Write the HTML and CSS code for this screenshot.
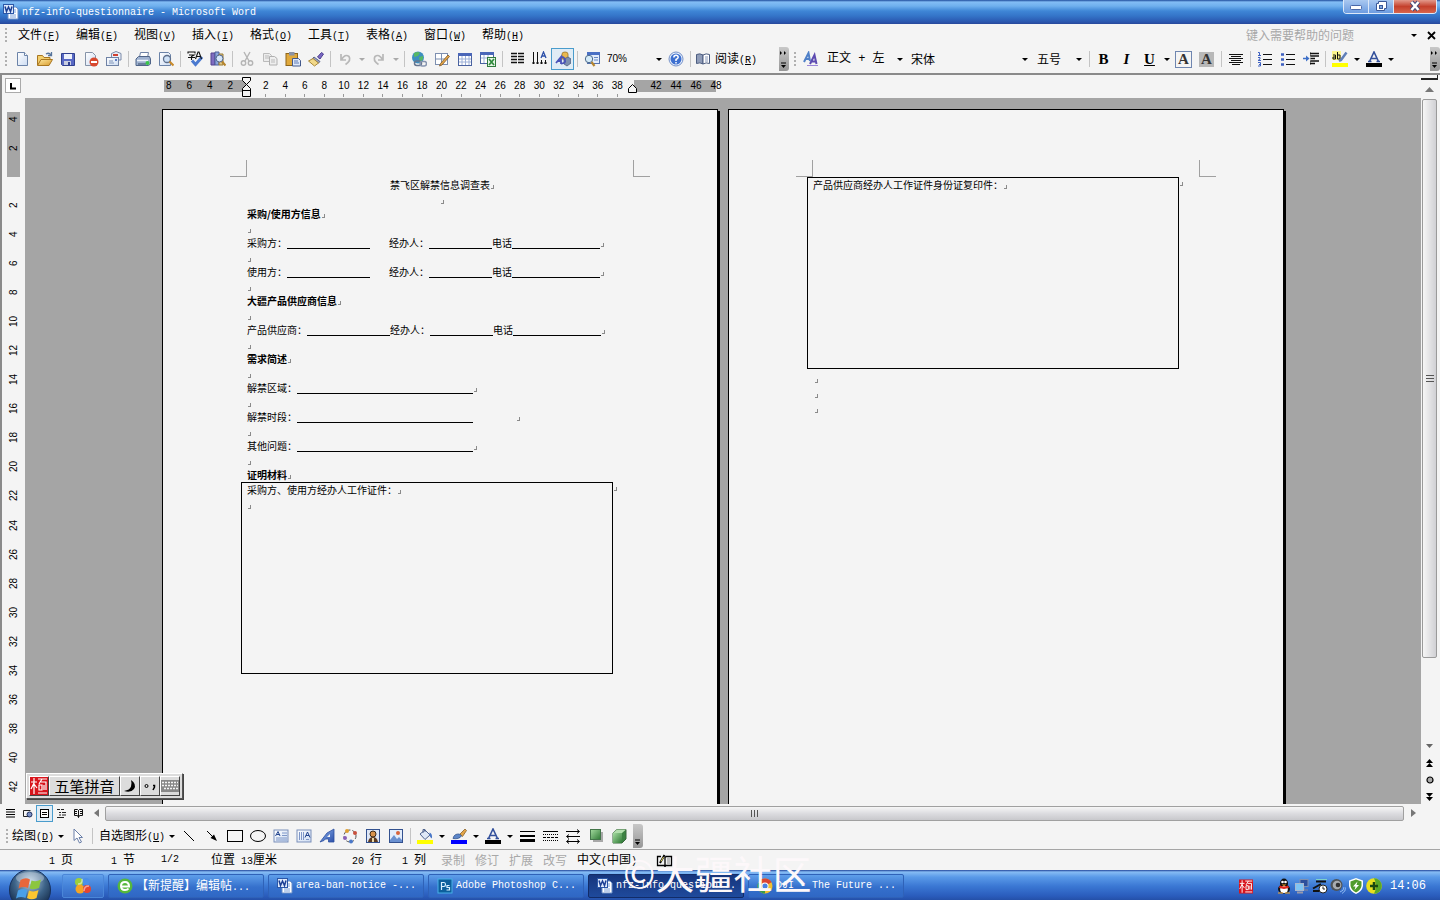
FILE: index.html
```html
<!DOCTYPE html>
<html lang="zh-CN">
<head>
<meta charset="utf-8">
<title>nfz-info-questionnaire - Microsoft Word</title>
<link rel="stylesheet" href="styles.css">
</head>
<body>
<svg class="defs" aria-hidden="true">
  <defs>
    <linearGradient id="gGold" x1="0" y1="0" x2="1" y2="1"><stop offset="0" stop-color="#ffe9a0"/><stop offset="1" stop-color="#d79a2b"/></linearGradient>
    <linearGradient id="gBlue" x1="0" y1="0" x2="1" y2="1"><stop offset="0" stop-color="#8db4f0"/><stop offset="1" stop-color="#2c4fa8"/></linearGradient>
    <linearGradient id="gPaper" x1="0" y1="0" x2="1" y2="1"><stop offset="0" stop-color="#fff"/><stop offset="1" stop-color="#cddcf2"/></linearGradient>
    <linearGradient id="gGreen" x1="0" y1="0" x2="1" y2="1"><stop offset="0" stop-color="#a5dca0"/><stop offset="1" stop-color="#2f7a35"/></linearGradient>
    <radialGradient id="gOrb" cx=".5" cy=".3" r=".75"><stop offset="0" stop-color="#b9d0e4"/><stop offset=".5" stop-color="#3d6388"/><stop offset="1" stop-color="#0a1c38"/></radialGradient>
    <symbol id="word" viewBox="0 0 16 16"><path d="M5 3h8l2 2v10H5z" fill="#fff" stroke="#6a8fc8"/><path d="M7 11h6M7 13h6M11 6h2M11 8h2" stroke="#7aa0da"/><rect x=".5" y=".5" width="10" height="9" fill="#dfeafc" stroke="#2b57a7"/><path d="M2 2.500l1.500 5L5.500 3l2 4.500L9 2.500" fill="none" stroke="#1c3f94" stroke-width="1.500"/></symbol>
    <symbol id="seal" viewBox="0 0 18 18"><rect width="18" height="18" fill="#d8141c"/><path d="M1 5h6M4 1v16M4 6L1 12M4 7l3 4M8 2h9M12 2L9 7M11 5h5v8M9 8v5h3V8zM14 8v5M8 16h9" fill="none" stroke="#fff" stroke-width="1.200"/></symbol>
  </defs>
</svg>
<div class="app">
  <header class="titlebar">
    <svg class="i16"><use href="#word"/></svg>
    <h1 class="title">nfz-info-questionnaire - Microsoft Word</h1>
    <div class="winctl">
      <button class="wc" aria-label="最小化"><svg width="14" height="12"><rect x="1.500" y="5.500" width="11" height="4" rx="1" fill="#fff" stroke="#4a68a8"/></svg></button>
      <button class="wc" aria-label="还原"><svg width="14" height="12"><path d="M4.500 1.500h8v7h-2v2h-8v-7h2z" fill="#fff" stroke="#3a5898"/><rect x="5.500" y="5.500" width="3" height="3" fill="#7fa8e0" stroke="#3a5898"/></svg></button>
      <button class="wc close" aria-label="关闭"><svg width="14" height="12"><path d="M3.500 2l7 8M10.500 2l-7 8" stroke="#4a4a78" stroke-width="4.500"/><path d="M3.500 2l7 8M10.500 2l-7 8" stroke="#fff" stroke-width="2.500"/></svg></button>
    </div>
  </header>

  <nav class="menubar">
    <i class="grip"></i>
    <button class="menu">文件<span class="m">(<u>F</u>)</span></button>
    <button class="menu">编辑<span class="m">(<u>E</u>)</span></button>
    <button class="menu">视图<span class="m">(<u>V</u>)</span></button>
    <button class="menu">插入<span class="m">(<u>I</u>)</span></button>
    <button class="menu">格式<span class="m">(<u>O</u>)</span></button>
    <button class="menu">工具<span class="m">(<u>T</u>)</span></button>
    <button class="menu">表格<span class="m">(<u>A</u>)</span></button>
    <button class="menu">窗口<span class="m">(<u>W</u>)</span></button>
    <button class="menu">帮助<span class="m">(<u>H</u>)</span></button>
    <input class="ask" type="text" placeholder="键入需要帮助的问题" aria-label="键入需要帮助的问题">
    <button class="drop" aria-label="帮助列表"></button>
    <button class="docclose" aria-label="关闭窗口"><svg width="9" height="9"><path d="M1 1l7 7M8 1L1 8" stroke="#000" stroke-width="1.800"/></svg></button>
  </nav>

  <div class="toolbars">
    <div class="toolbar std">
      <i class="grip"></i>
      <button class="tb" aria-label="新建"><svg class="i16"><path d="M3.500 1.500h7l3 3v10h-10z" fill="url(#gPaper)" stroke="#6b83a8"/><path d="M10.500 1.500v3h3" fill="#fff" stroke="#6b83a8"/></svg></button>
      <button class="tb" aria-label="打开"><svg class="i16"><path d="M.5 14V4.500h5l1.500 2h6V9" fill="#f3cf6d" stroke="#a87620"/><path d="M.5 14.500L4 8.500h11.500l-3.500 6z" fill="url(#gGold)" stroke="#a87620"/><path d="M9 3q3-2 5 1M14.500 1v3.500H11" fill="none" stroke="#56749c" stroke-width="1.300"/></svg></button>
      <button class="tb" aria-label="保存"><svg class="i16"><path d="M1.500 2.500h13v12h-12l-1-1z" fill="#5868c4" stroke="#31418f"/><rect x="4" y="3" width="8" height="5" fill="#eef2fb"/><rect x="4" y="10" width="7" height="4" fill="#c8cde0"/><rect x="8" y="11" width="2" height="3" fill="#31418f"/></svg></button>
      <button class="tb" aria-label="权限"><svg class="i16"><path d="M2.500 1.500h7l3 3v10h-10z" fill="url(#gPaper)" stroke="#8593a8"/><circle cx="11" cy="11" r="4.500" fill="#d8482e"/><rect x="8" y="10" width="6" height="2" fill="#fff"/></svg></button>
      <button class="tb" aria-label="电子邮件"><svg class="i16"><path d="M5.500 6V2.500L10 .5l5 2V9h-3" fill="#e9eef7" stroke="#7a8aa8"/><path d="M7 4h5" stroke="#d04030" stroke-width="2"/><rect x=".5" y="6.500" width="12" height="8" fill="url(#gPaper)" stroke="#6f82a5"/><path d="M3 10h4M3 12h5" stroke="#7d93b8"/><rect x="9" y="8" width="2" height="2" fill="#5a7ac0"/></svg></button>
      <i class="sep"></i>
      <button class="tb" aria-label="打印"><svg class="i16"><path d="M4.500 6l1-4.500h8l-1 5" fill="#fff" stroke="#6f82a5"/><path d="M1 8l2.500-2.500h11L15.500 8v5l-2 1.500H1z" fill="#9fb2d0" stroke="#4f6488"/><path d="M2 9.500h11" stroke="#eef3fb" stroke-width="1.500"/><path d="M3 13h8" stroke="#394a68"/><circle cx="12.500" cy="12" r="2" fill="#39c54a"/></svg></button>
      <button class="tb" aria-label="打印预览"><svg class="i16"><path d="M1.500 1.500h9l2 2v11h-11z" fill="url(#gPaper)" stroke="#6b83a8"/><circle cx="9" cy="8" r="3.500" fill="#cfe2f8" stroke="#5d6f8c" stroke-width="1.300"/><path d="M11.500 10.500l4 4" stroke="#c88a2c" stroke-width="2.200"/></svg></button>
      <i class="sep"></i>
      <button class="tb" aria-label="拼写和语法"><svg class="i16"><path d="M5 9.500l3.500 4L15 6" fill="none" stroke="#4b7ad0" stroke-width="3"/><path d="M1 2.500V1h7v1.500M2 4h5L4.500 5.500V9M1 6.500h7M8.500 8l2.500-7h1l2.500 7M9.500 5.500h4" fill="none" stroke="#111" stroke-width="1.100"/></svg></button>
      <button class="tb" aria-label="信息检索"><svg class="i16"><path d="M1 2h4v12H1z" fill="#7e6cc0" stroke="#54428f"/><path d="M5 1h4v13H5z" fill="#8aa4dc" stroke="#4c5f98"/><path d="M9 3h4v11H9z" fill="#dfc586" stroke="#9a7c34"/><circle cx="9.500" cy="7.500" r="3.500" fill="#d4e6fb" stroke="#51648c"/><path d="M12 10.500l3.500 4" stroke="#b5852f" stroke-width="2.200"/></svg></button>
      <i class="sep"></i>
      <button class="tb" aria-label="剪切"><svg class="i16"><path d="M5 1l5 9M11 1L6 10" stroke="#b5b5b5" stroke-width="1.400"/><circle cx="4.500" cy="12" r="2.200" fill="none" stroke="#b5b5b5" stroke-width="1.400"/><circle cx="11.500" cy="12" r="2.200" fill="none" stroke="#b5b5b5" stroke-width="1.400"/></svg></button>
      <button class="tb" aria-label="复制"><svg class="i16"><path d="M1.500 2.500h6l2 2v6h-8z" fill="#ececec" stroke="#bbb"/><path d="M7.500 5.500h5l2.500 2v6.500H7.500z" fill="#eee" stroke="#b0b0b0"/><path d="M3 5h4M3 7h4M9 9h4M9 11h4" stroke="#bbb"/></svg></button>
      <button class="tb" aria-label="粘贴"><svg class="i16"><rect x="1" y="2.500" width="11.500" height="12" fill="#e0a93c" stroke="#8d651b"/><rect x="4" y="1" width="5.500" height="3.500" fill="#8b93a5"/><path d="M7.500 7.500h6l2 2v5.500h-8z" fill="#dfe9fa" stroke="#42598c"/><path d="M9 10h4M9 12h5" stroke="#5f7ab5"/></svg></button>
      <button class="tb" aria-label="格式刷"><svg class="i16"><path d="M9.500 6L13.500 1.500l2 1.500L12 8z" fill="#7a68c4" stroke="#4d3f90"/><path d="M6 6l6 4.500-1.500 1.500-6-4.500z" fill="#9aa3c0" stroke="#5d678c"/><path d="M5 7.500l5.500 4.500-4 3L.5 10z" fill="#f2d98a" stroke="#a9893a"/></svg></button>
      <i class="sep"></i>
      <button class="tb" aria-label="撤消"><svg class="i16"><path d="M4 3v6h5M4.500 8.500Q8 2.500 12 5.500q2.500 4-3.500 8" fill="none" stroke="#b8b8b8" stroke-width="1.700"/></svg></button><button class="drop off" aria-label="撤消列表"></button>
      <button class="tb" aria-label="恢复"><svg class="i16"><path d="M12 3v6H7M11.500 8.500Q8 2.500 4 5.500q-2.500 4 3.500 8" fill="none" stroke="#b8b8b8" stroke-width="1.700"/></svg></button><button class="drop off" aria-label="恢复列表"></button>
      <i class="sep"></i>
      <button class="tb" aria-label="超链接"><svg class="i16"><circle cx="7" cy="6.500" r="6" fill="#3d8fc0"/><path d="M3 2q4-2 6 0l-2 3-4 1zM8 6l4-1v3l-3 4z" fill="#57b865"/><rect x="3.500" y="10" width="7" height="4.500" rx="2.200" fill="none" stroke="#66758f" stroke-width="1.500"/><rect x="9" y="10.500" width="6.500" height="4.500" rx="2.200" fill="none" stroke="#8795b0" stroke-width="1.500"/></svg></button>
      <button class="tb" aria-label="表格和边框"><svg class="i16"><rect x="1.500" y="2.500" width="12" height="11" fill="#fff" stroke="#7d8fb0"/><path d="M7.500 2.500v11M1.500 8h12" stroke="#7d8fb0"/><path d="M14 4l1.500 1.500L8 14l-2.500 1 1-2.500z" fill="#e3a548" stroke="#7d5725" stroke-width=".8"/></svg></button>
      <button class="tb" aria-label="插入表格"><svg class="i16"><rect x="1.500" y="2.500" width="13" height="12" fill="#fff" stroke="#4a62a0"/><rect x="1" y="2" width="14" height="3" fill="#4a66b8"/><path d="M5 5v9M8.500 5v9M12 5v9M2 8h12M2 11h12" stroke="#9db0d8"/></svg></button>
      <button class="tb" aria-label="插入 Excel 工作表"><svg class="i16"><rect x=".5" y="1.500" width="13" height="11" fill="#fff" stroke="#4a62a0"/><rect x="0" y="1" width="14" height="3" fill="#4a66b8"/><path d="M4 4v8M8 4v8M1 7h12" stroke="#9db0d8"/><rect x="7.500" y="6.500" width="8" height="9" fill="#e6f5e6" stroke="#2f7a3c"/><path d="M9 8l5 6M14 8l-5 6" stroke="#2f8a3c" stroke-width="1.700"/></svg></button>
      <i class="sep"></i>
      <button class="tb" aria-label="分栏"><svg class="i16"><path d="M2 2.500h6M2 5.500h6M2 8.500h6M2 11.500h6M9 2.500h6M9 5.500h6M9 8.500h6M9 11.500h6" stroke="#111" stroke-width="1.300"/></svg></button>
      <button class="tb" aria-label="文字方向"><svg class="i16"><path d="M1.500 1v12M5.500 1v12M9.500 9v4M13.500 9v4M0 12h3M4 12h3M8 12h3M12 12h3" stroke="#111"/><path d="M9 7l2.500-6L14 7M10 5h3" fill="none" stroke="#2c4fa8" stroke-width="1.300"/></svg></button>
      <button class="tb on" aria-label="绘图"><svg class="i16"><path d="M7 3q0-2 3-2t3 2v5H7z" fill="#e9b94f" stroke="#9b7425" stroke-width=".8"/><path d="M9 8l4-2 3 2v4l-4 3-3-2z" fill="#7c8fae" stroke="#4f607e" stroke-width=".8"/><path d="M1 12l5-6v7M3 10h3M6 12.500q5 0 4-3.500T6 6" fill="none" stroke="#4953b8" stroke-width="1.800"/></svg></button>
      <i class="sep"></i>
      <button class="tb" aria-label="文档结构图"><svg class="i16"><rect x="3.500" y="1.500" width="12" height="11" fill="#e4edfb" stroke="#5572ad"/><rect x="3" y="1" width="13" height="3" fill="#4a70c4"/><path d="M10 6.500h4M10 9h4" stroke="#6688c4"/><circle cx="5" cy="8" r="3.700" fill="#d4ebf8" stroke="#4d6a8c"/><path d="M7.500 11l3 4" stroke="#b5852f" stroke-width="2.200"/></svg></button>
      <label class="combo zoom"><select aria-label="显示比例"><option>70%</option></select></label>
      <button class="tb" aria-label="帮助"><svg class="i16"><circle cx="8" cy="8" r="7" fill="#e9f1fd" stroke="#7591c8"/><circle cx="8" cy="8" r="5.500" fill="#3d70d0"/><path d="M5.800 6.500Q6 4.300 8 4.300t2.200 2Q10.200 7.500 8 8.500V10M8 11v1.500" fill="none" stroke="#fff" stroke-width="1.500"/></svg></button>
      <i class="sep"></i>
      <button class="tb read"><svg class="i16"><path d="M8 4Q5 2 1.500 3.500v9Q5 11 8 13z" fill="#8f9cb8" stroke="#4c5d80"/><path d="M8 4q3-2 6.500-.5v9Q11 11 8 13z" fill="#fff" stroke="#4c5d80"/><path d="M10 6h3M10 8h3M10 10h3" stroke="#8a9aba"/></svg><span>阅读<span class="m">(<u>R</u>)</span></span></button>
    </div>
    <button class="more" aria-label="工具栏选项"><svg width="9" height="24"><path d="M1 4l2 2-2 2zM5 4l2 2-2 2z" fill="#000"/><path d="M2 16h5" stroke="#000"/><path d="M2 18h5l-2.500 3z" fill="#000"/></svg></button>
    <div class="toolbar fmt">
      <i class="grip"></i>
      <button class="tb" aria-label="格式窗格"><svg class="i16"><path d="M1 11L5.500 2l1.500 8M3 8h4" fill="none" stroke="#4f80c8" stroke-width="2"/><path d="M7 13L11.500 4l2 9M9 10.500h4" fill="none" stroke="#5d4bb0" stroke-width="2"/><path d="M4 14.500h11" stroke="#9a86d8"/></svg></button>
      <label class="combo style"><select aria-label="样式"><option>正文 + 左</option></select></label>
      <label class="combo font"><select aria-label="字体"><option>宋体</option></select></label>
      <label class="combo size"><select aria-label="字号"><option>五号</option></select></label>
      <i class="sep"></i>
      <button class="tb serif b">B</button>
      <button class="tb serif it">I</button>
      <button class="tb serif un">U</button><button class="drop" aria-label="下划线"></button>
      <button class="tb" aria-label="字符边框"><span class="serif cbox">A</span></button>
      <button class="tb" aria-label="字符底纹"><span class="serif cshade">A</span></button>
      <i class="sep"></i>
      <button class="tb" aria-label="居中"><svg class="i16"><path d="M1 3.500h14M3 5.500h10M1 7.500h14M3 9.500h10M1 11.500h14M4 13.500h8" stroke="#111"/></svg></button>
      <i class="sep"></i>
      <button class="tb" aria-label="编号"><svg class="i16"><path d="M6 3.500h9M6 8.500h9M6 13.500h9" stroke="#111"/><path d="M1 1.500h1.500v3M1 4.500h3M1 6.500h2v1.500L1 9.500h3M1 11.500h2.500v3.500H1M2 13.500h1.500" fill="none" stroke="#3d5fc0"/></svg></button>
      <button class="tb" aria-label="项目符号"><svg class="i16"><path d="M6 3.500h9M6 8.500h9M6 13.500h9" stroke="#111"/><path d="M1 3.500h3M1 8.500h3M1 13.500h3" stroke="#3d5fc0" stroke-width="2.500"/></svg></button>
      <button class="tb" aria-label="增加缩进"><svg class="i16"><path d="M7 2.500h9M7 5h9M7 7.500h5M7 10h9M7 12.500h5" stroke="#111" stroke-width="1.300"/><path d="M7.500 1v14" stroke="#777" stroke-dasharray="1 1"/><path d="M0 7.500h4" stroke="#3d6fc8" stroke-width="1.500"/><path d="M3 4.500l3.500 3-3.500 3z" fill="#3d6fc8"/></svg></button>
      <i class="sep"></i>
      <button class="tb" aria-label="突出显示"><svg class="i16"><rect y="12" width="16" height="4" fill="#ff0"/><rect width="9" height="9" fill="#fbf58e"/><path d="M1 4h2.500v4H1V6h2M5.500 1v7H8V4H5.500" fill="none" stroke="#111"/><path d="M14.500 1.500L9 9l-2 1" fill="none" stroke="#5f7fb8" stroke-width="2.500"/></svg></button><button class="drop" aria-label="突出显示颜色"></button>
      <button class="tb" aria-label="字体颜色"><svg class="i16"><rect y="12" width="16" height="4" fill="#000"/><path d="M3.500 10.500L8 1l4.500 9.500M5.500 7.500h5M2 10.500h3.500M10.500 10.500H14" fill="none" stroke="#34519c" stroke-width="1.600"/></svg></button><button class="drop" aria-label="字体颜色列表"></button>
    </div>
    <button class="more" aria-label="工具栏选项"><svg width="9" height="24"><path d="M1 4l2 2-2 2zM5 4l2 2-2 2z" fill="#000"/><path d="M2 16h5" stroke="#000"/><path d="M2 18h5l-2.500 3z" fill="#000"/></svg></button>
  </div>

  <main class="work">
    <div class="corner"><button class="tabsel" aria-label="制表符"><svg width="14" height="14"><path d="M5 4v5.500h5" fill="none" stroke="#000" stroke-width="2"/></svg></button></div>
    <div class="hruler">
      <div class="hscale">
        <div class="hleft"><span>8</span><span>6</span><span>4</span><span>2</span></div>
        <div class="hmid"><span>2</span><span>4</span><span>6</span><span>8</span><span>10</span><span>12</span><span>14</span><span>16</span><span>18</span><span>20</span><span>22</span><span>24</span><span>26</span><span>28</span><span>30</span><span>32</span><span>34</span><span>36</span><span>38</span></div>
        <div class="hright"><span>42</span><span>44</span><span>46</span><span>48</span></div>
        <svg class="indent" width="11" height="22"><path d="M1.500 1.500h8v3l-4 4-4-4zM5.500 8.500l4 4v8h-8v-8zM1.500 14.500h8" fill="#f4f4f4" stroke="#000"/></svg>
        <svg class="rindent" width="11" height="11"><path d="M1.500 9.500v-4l4-4 4 4v4z" fill="#f4f4f4" stroke="#000"/></svg>
      </div>
    </div>
    <div class="vscroll">
      <i class="split"></i>
      <button class="sb up" aria-label="向上"><svg width="9" height="5"><path d="M0 5l4.500-5L9 5z" fill="#777"/></svg></button>
      <div class="vthumb"><i></i><i></i><i></i></div>
      <span class="vfill"></span>
      <button class="sb" aria-label="向下"><svg width="7" height="4"><path d="M0 0h7L3.500 4z" fill="#666"/></svg></button>
      <button class="sb" aria-label="前一页"><svg width="7" height="8"><path d="M0 4l3.500-4L7 4zM0 8l3.500-4L7 8z" fill="#000"/></svg></button>
      <button class="sb" aria-label="选择浏览对象"><svg width="8" height="8"><circle cx="4" cy="4" r="3" fill="#aaa" stroke="#000" stroke-width="1.200"/></svg></button>
      <button class="sb" aria-label="下一页"><svg width="7" height="8"><path d="M0 0h7L3.500 4zM0 4h7L3.500 8z" fill="#000"/></svg></button>
    </div>
    <div class="vruler">
      <div class="vtop"><span>4</span><span>2</span></div>
      <div class="vmid"><span>2</span><span>4</span><span>6</span><span>8</span><span>10</span><span>12</span><span>14</span><span>16</span><span>18</span><span>20</span><span>22</span><span>24</span><span>26</span><span>28</span><span>30</span><span>32</span><span>34</span><span>36</span><span>38</span><span>40</span><span>42</span></div>
    </div>
    <div class="desk">
      <article class="page">
        <div class="crops"><i class="crop l"></i><i class="crop r"></i></div>
        <div class="body">
          <p class="center">禁飞区解禁信息调查表<i class="mark"></i></p>
          <p class="gap center"><i class="mark"></i></p>
          <p class="bold">采购/使用方信息<i class="mark"></i></p>
          <p class="gap"><i class="mark"></i></p>
          <p><span class="lab3">采购方：</span><span class="w83"></span><span class="tab"></span><span class="lab3">经办人：</span><span class="w63"></span><span>电话</span><span class="w88"></span><i class="mark"></i></p>
          <p class="gap"><i class="mark"></i></p>
          <p><span class="lab3">使用方：</span><span class="w83"></span><span class="tab"></span><span class="lab3">经办人：</span><span class="w63"></span><span>电话</span><span class="w88"></span><i class="mark"></i></p>
          <p class="gap"><i class="mark"></i></p>
          <p class="bold">大疆产品供应商信息<i class="mark"></i></p>
          <p class="gap"><i class="mark"></i></p>
          <p><span>产品供应商：</span><span class="w83"></span><span class="lab3">经办人：</span><span class="w63"></span><span>电话</span><span class="w88"></span><i class="mark"></i></p>
          <p class="gap"><i class="mark"></i></p>
          <p class="bold">需求简述<i class="mark"></i></p>
          <p class="gap"><i class="mark"></i></p>
          <p><span>解禁区域：</span><span class="w176"></span><i class="mark"></i></p>
          <p class="gap"><i class="mark"></i></p>
          <p><span>解禁时段：</span><span class="w176"></span><span class="tab wide"></span><i class="mark"></i></p>
          <p class="gap"><i class="mark"></i></p>
          <p><span>其他问题：</span><span class="w176"></span><i class="mark"></i></p>
          <p class="gap"><i class="mark"></i></p>
          <p class="bold">证明材料<i class="mark"></i></p>
          <div class="cellrow">
            <div class="cell"><p>采购方、使用方经办人工作证件：<i class="mark"></i></p><p><i class="mark"></i></p></div>
            <i class="mark"></i>
          </div>
        </div>
      </article>
      <article class="page">
        <div class="crops"><i class="crop l"></i><i class="crop r"></i></div>
        <div class="body">
          <div class="cellrow">
            <div class="cell"><p>产品供应商经办人工作证件身份证复印件：<i class="mark"></i></p></div>
            <i class="mark"></i>
          </div>
          <p><i class="mark in"></i></p>
          <p><i class="mark in"></i></p>
          <p><i class="mark in"></i></p>
        </div>
      </article>
    </div>
  </main>

  <div class="hscroll">
    <button class="vw" aria-label="普通视图"><svg width="11" height="11"><path d="M1 1.500h9M1 4h9M1 6.500h9M1 9h9" stroke="#000" stroke-width="1.200"/></svg></button>
    <button class="vw" aria-label="Web 版式视图"><svg width="11" height="11"><path d="M8 8.500H1.500v-6h7" fill="none" stroke="#222"/><circle cx="7.500" cy="6.500" r="2.500" fill="#7d93c8" stroke="#1c2d5c"/></svg></button>
    <button class="vw on" aria-label="页面视图"><svg width="11" height="11"><rect x="1.500" y="1.500" width="8" height="8" fill="#fff" stroke="#000"/><path d="M3 4.500h5M3 6.500h5" stroke="#000"/></svg></button>
    <button class="vw" aria-label="大纲视图"><svg width="11" height="11"><path d="M1 1.500h3M5 1.500h3M3 4.500h2M6 4.500h4M3 7h2M6 7h4M1 9.500h7" stroke="#222"/></svg></button>
    <button class="vw" aria-label="阅读版式"><svg width="11" height="11"><path d="M1.500 1.500h3l1 1 1-1h3v6h-3l-1 2-1-2h-3zM5.500 2.500v7M2 3.500h2M2 5.500h2M7 3.500h2M7 5.500h2" fill="none" stroke="#111"/></svg></button>
    <button class="ha" aria-label="向左"><svg width="5" height="8"><path d="M5 0v8L0 4z" fill="#777"/></svg></button>
    <div class="hthumb"><i></i><i></i><i></i></div>
    <button class="ha" aria-label="向右"><svg width="5" height="8"><path d="M0 0v8l5-4z" fill="#777"/></svg></button>
  </div>

  <div class="drawbar">
    <i class="grip"></i>
    <button class="txt">绘图<span class="m">(<u>D</u>)</span></button><button class="drop" aria-label="绘图菜单"></button>
    <button class="tb" aria-label="选择对象"><svg class="i16"><path d="M4 1v11.500l3-2.500 2.500 5 2-1-2.500-4.500h3.500z" fill="#fff" stroke="#6a7fa8"/></svg></button>
    <i class="sep"></i>
    <button class="txt">自选图形<span class="m">(<u>U</u>)</span></button><button class="drop" aria-label="自选图形菜单"></button>
    <button class="tb" aria-label="直线"><svg class="i16"><path d="M3 3l10 10" stroke="#000"/></svg></button>
    <button class="tb" aria-label="箭头"><svg class="i16"><path d="M3 3l7 7" stroke="#000"/><path d="M13 13L6.500 10l3.500-3.500z" fill="#000"/></svg></button>
    <button class="tb" aria-label="矩形"><svg class="i16"><rect x=".5" y="2.500" width="15" height="11" fill="none" stroke="#000"/></svg></button>
    <button class="tb" aria-label="椭圆"><svg class="i16"><ellipse cx="8" cy="8" rx="7.500" ry="5.500" fill="none" stroke="#000"/></svg></button>
    <button class="tb" aria-label="文本框"><svg class="i16"><rect x="1" y="2" width="14" height="12" fill="url(#gPaper)" stroke="#7b8fba"/><path d="M2.500 8L5 3.500 7 8M3.500 6.500h3" fill="none" stroke="#23458f"/><path d="M9 5h5M9 7.500h5M3 10h11M3 12h11" stroke="#7f97c8"/></svg></button>
    <button class="tb" aria-label="竖排文本框"><svg class="i16"><rect x="1" y="2" width="14" height="12" fill="url(#gPaper)" stroke="#7b8fba"/><path d="M9 9.500L11.500 4 14 9.500M10 7.500h3" fill="none" stroke="#23458f"/><path d="M3.500 4v8M5.500 4v8M7.500 4v8M10 11.500h3" stroke="#7f97c8"/></svg></button>
    <button class="tb" aria-label="艺术字"><svg class="i16"><path d="M1 14l4-1.500L6.500 11h3v3H15V1L8 5z" fill="url(#gBlue)" stroke="#2c4fa0" stroke-width=".8"/><path d="M8 9l3-3v3z" fill="#f4f4f4"/></svg></button>
    <button class="tb" aria-label="组织结构图"><svg class="i16"><circle cx="8" cy="8" r="6" fill="none" stroke="#555" stroke-dasharray="3 2"/><circle cx="5" cy="3" r="2" fill="#e0a030"/><circle cx="13" cy="5" r="2" fill="#c8503c"/><circle cx="3" cy="10" r="2" fill="#8a60b8"/><circle cx="9" cy="13.500" r="2" fill="#4a78c8"/></svg></button>
    <button class="tb" aria-label="剪贴画"><svg class="i16"><rect x="1.500" y="1.500" width="13" height="13" fill="#dfe7f5" stroke="#33518f"/><circle cx="8" cy="6" r="3" fill="#d8924a" stroke="#3c2a18"/><path d="M3 14q1-5 5-5t5 5z" fill="#5c3a20"/><path d="M8 14v-4" stroke="#e8d8a8" stroke-width="2"/></svg></button>
    <button class="tb" aria-label="图片"><svg class="i16"><rect x="1.500" y="1.500" width="13" height="13" fill="#e3edfb" stroke="#33518f"/><path d="M2 12l4-5 3 4 2-2 3 3v2H2z" fill="#6a90d0"/><circle cx="10" cy="5" r="2" fill="#d8643c"/></svg></button>
    <i class="sep"></i>
    <button class="tb" aria-label="填充颜色"><svg class="i16"><rect y="12" width="16" height="4" fill="#ff0"/><path d="M3 6l5-4 5 5-5 4.500z" fill="#dfe8f6" stroke="#51658f"/><path d="M6 5V1.500h2V4" fill="none" stroke="#51658f"/><path d="M12.500 4.500q3 1 2.500 6-2-1-2.500-3z" fill="#4a78c8"/></svg></button><button class="drop" aria-label="填充颜色列表"></button>
    <button class="tb" aria-label="线条颜色"><svg class="i16"><rect y="12" width="16" height="4" fill="#00f"/><path d="M9 6l5-5 1.500 1.500-4 6z" fill="#e3a548" stroke="#8a622b" stroke-width=".8"/><path d="M2 10.500q1-5 6.500-4.500l2 2Q8 11.500 2 10.500z" fill="#5d86c8" stroke="#33558f" stroke-width=".8"/></svg></button><button class="drop" aria-label="线条颜色列表"></button>
    <button class="tb" aria-label="字体颜色"><svg class="i16"><rect y="12" width="16" height="4" fill="#000"/><path d="M3.500 10.500L8 1l4.500 9.500M5.500 7.500h5M2 10.500h3.500M10.500 10.500H14" fill="none" stroke="#34519c" stroke-width="1.600"/></svg></button><button class="drop" aria-label="字体颜色列表"></button>
    <button class="tb" aria-label="线型"><svg class="i16"><path d="M1 3.500h15" stroke="#000"/><path d="M1 8h15" stroke="#000" stroke-width="2"/><path d="M1 12.500h15" stroke="#000" stroke-width="3"/></svg></button>
    <button class="tb" aria-label="虚线线型"><svg class="i16"><path d="M1 3.500h15" stroke="#000"/><path d="M1 6.500h15M1 12.500h15" stroke="#000" stroke-dasharray="1 1"/><path d="M1 9.500h15" stroke="#000" stroke-dasharray="3 1"/></svg></button>
    <button class="tb" aria-label="箭头样式"><svg class="i16"><path d="M1 3.500h13M2 8.500h13M2 13.500h12M12 1.500l2.500 2L12 5.500M4 6.500l-2.500 2 2.500 2M4 11.500l-2.500 2 2.500 2M12 11.500l2.500 2-2.500 2" fill="none" stroke="#000"/></svg></button>
    <button class="tb" aria-label="阴影样式"><svg class="i16"><rect x="5" y="4" width="10" height="10" fill="#a8a8a8"/><rect x="2.500" y="1.500" width="10" height="10" fill="url(#gGreen)" stroke="#44764a"/></svg></button>
    <button class="tb" aria-label="三维效果样式"><svg class="i16"><path d="M2 5l4-3.500h9V11l-4 4H2z" fill="#3b8241" stroke="#39663c"/><path d="M2 5l4-3.500h9L11 5z" fill="#b4e0ae"/><rect x="2" y="5" width="9" height="10" fill="url(#gGreen)"/></svg></button>
    <button class="more" aria-label="工具栏选项"><svg width="9" height="24"><path d="M2 16h5" stroke="#000"/><path d="M2 18h5l-2.500 3z" fill="#000"/></svg></button>
  </div>

  <footer class="status">
    <span class="s62"><span class="m">1&nbsp;</span>页</span><span class="s50"><span class="m">1&nbsp;</span>节</span><span class="s50 m">1/2</span><span class="s141">位置<span class="m">&nbsp;13</span>厘米</span><span class="s50"><span class="m">20&nbsp;</span>行</span><span class="s39"><span class="m">1&nbsp;</span>列</span><span class="s34 dim">录制</span><span class="s34 dim">修订</span><span class="s34 dim">扩展</span><span class="s34 dim">改写</span><span class="s79">中文<span class="m">(</span>中国<span class="m">)</span></span>
    <svg width="17" height="13"><path d="M5 2.500H1.500v9H8l1 1 1-1h5.500v-9H10L9 3.500V12" fill="none" stroke="#000" stroke-width="1.300"/><path d="M11 5h3M11 7h3M11 9h3" stroke="#888"/><path d="M8.500 1L4 9" stroke="#000" stroke-width="2"/><path d="M7.500 3L5 7.500" stroke="#e8d860"/></svg>
  </footer>

  <div class="taskbar">
    <button class="start" aria-label="开始"><svg width="44" height="30"><circle cx="22" cy="20" r="20.500" fill="url(#gOrb)" stroke="#16305c"/><ellipse cx="22" cy="8" rx="14" ry="6" fill="#fff" opacity=".3"/><path d="M12.500 10q5-3 9.500-.5L20 18q-5-2-9.500.5z" fill="#e8673c"/><path d="M23.500 10.500q4.500 2 9.500-1L31 18q-5 2-9.500.5z" fill="#8cc63e"/><path d="M10 20.500q5-2.500 9.500-.5L17.500 28q-5-2-9.500.5z" fill="#4aa0e8"/><path d="M21 20.500q5 2 9.500-.5l-2 8q-5 2.500-9.500 0z" fill="#fcc630"/></svg></button>
    <button class="quick" aria-label="快速启动"><svg width="18" height="18"><circle cx="5" cy="5" r="4" fill="#9ccf3c"/><circle cx="12" cy="4.500" r="3.500" fill="#4a8fe8"/><circle cx="6" cy="12" r="4.500" fill="#f5a524"/><circle cx="13" cy="12" r="4" fill="#e5452f"/><path d="M4 7q5 0 4-5M10 14q0-5 5-5" fill="none" stroke="#fff" stroke-width="1.500" opacity=".5"/></svg></button>
    <button class="task"><svg class="i16"><circle cx="8" cy="8" r="7.500" fill="#56b83c"/><path d="M4 8.500h8Q12 4 8 4T4 8t4 4q2.500 0 3.500-1.500" fill="none" stroke="#fff" stroke-width="2"/></svg><span>【新提醒】编辑帖<span class="m">...</span></span></button>
    <button class="task"><svg class="i16"><use href="#word"/></svg><span class="m">area-ban-notice -...</span></button>
    <button class="task"><svg class="i16"><rect x="1" y="1" width="14" height="14" fill="#0c5f9c" stroke="#49b0e8"/><path d="M4.500 12V4.500H7q1.500 0 1.500 2T7 8.500H4.500M12.500 7.500h-2.500v2h2.500v2.500H9.500" fill="none" stroke="#d8f0ff" stroke-width="1.200"/></svg><span class="m">Adobe Photoshop C...</span></button>
    <button class="task active"><svg class="i16"><use href="#word"/></svg><span class="m">nfz-info-question...</span></button>
    <button class="task"><svg class="i16"><circle cx="8" cy="8" r="7.500" fill="#f0c030"/><path d="M8 8L1.500 4.200A7.500 7.500 0 0 1 14.500 4.200z" fill="#dc4432"/><path d="M8 8L1.500 4.200A7.500 7.500 0 0 0 8 15.500z" fill="#3a9a4a"/><circle cx="8" cy="8" r="3.500" fill="#fff"/><circle cx="8" cy="8" r="2.600" fill="#4a80e0"/></svg><span class="m">DJI - The Future ...</span></button>
    <div class="tray">
      <svg class="ts" width="14" height="17"><use href="#seal" width="14" height="17"/></svg>
      <svg class="i16"><ellipse cx="8" cy="11" rx="6" ry="4.500" fill="#111"/><ellipse cx="8" cy="5.500" rx="4" ry="5" fill="#111"/><ellipse cx="8" cy="11.500" rx="3.800" ry="3.500" fill="#fff"/><circle cx="6.500" cy="4" r="1.300" fill="#fff"/><circle cx="9.500" cy="4" r="1.300" fill="#fff"/><path d="M5.500 6.500h5L8 8zM2 14.500h5v1H2zM9 14.500h5v1H9z" fill="#f5a524"/><path d="M3.500 8.500q4.500 2.500 9 0" fill="none" stroke="#e0281c" stroke-width="2.500"/></svg>
      <svg class="i16"><rect x="6" y="1.500" width="8" height="7" fill="#2d4f9c" stroke="#8090b0"/><path d="M10 9v3h4" stroke="#889" fill="none"/><rect x="1.500" y="5.500" width="8" height="7" fill="#7fc4f4" stroke="#a8b8d0"/><path d="M3 14.500h6" stroke="#99a" stroke-width="2"/></svg>
      <svg class="i16"><path d="M4 3.500h10M1 10.500L9 6M1 13h8" stroke="#111" stroke-width="2"/><path d="M4 1.500h11" stroke="#7fd0c8"/><circle cx="11" cy="11" r="4" fill="#fff" stroke="#222"/><path d="M11 8.500V11h2" fill="none" stroke="#222"/></svg>
      <svg class="i16"><circle cx="6.500" cy="7" r="6" fill="#4f5458"/><circle cx="7" cy="7" r="4.300" fill="#a8acb0"/><circle cx="8" cy="7" r="2.300" fill="#333"/><path d="M10 14q4-1 4-5M12 15.500q4-2 3.500-6" fill="none" stroke="#8fb8f0"/></svg>
      <svg class="i16"><path d="M8 0l7 2.500V8q-1 5.500-7 8-6-2.500-7-8V2.500z" fill="#fff"/><path d="M8 1.500l5.500 2V8Q12.500 12 8 14.500 3.500 12 2.500 8V3.500z" fill="#4f9c2c"/><path d="M9.500 3.500L5 8.500h2.500L6.500 12 11 7H8.500z" fill="#fff"/></svg>
      <svg class="i16"><circle cx="8" cy="8" r="7.800" fill="#e8e020"/><path d="M8 .2a7.800 7.800 0 0 1 0 15.600Q12 8 8 .2z" fill="#58a828"/><path d="M8 4v8M4 8h8" stroke="#1a4a10" stroke-width="2.500"/></svg>
      <time class="clock">14:06</time>
    </div>
  </div>

  <div class="ime">
    <button aria-label="极点"><svg width="18" height="18"><use href="#seal" width="18" height="18"/></svg></button>
    <button class="imename">五笔拼音</button>
    <button aria-label="半角"><svg width="18" height="18"><path d="M10 3q6 4 3 9-3 4-10 2 6-1 7-4.500Q11 6 10 3z" fill="#000"/></svg></button>
    <button aria-label="标点"><svg width="18" height="18"><circle cx="5.500" cy="9" r="1.500" fill="none" stroke="#000"/><path d="M12 8.500h1.500V10L12 13" fill="none" stroke="#000" stroke-width="1.500"/></svg></button>
    <button aria-label="软键盘"><svg width="18" height="18"><rect y="3" width="18" height="12" fill="#888"/><path d="M1 5.500h16M1 8.500h16M3 11.500h14" stroke="#f4f4f4" stroke-width="1.500" stroke-dasharray="2 1"/></svg></button>
  </div>
  <div class="watermark">©大疆社区</div>
</div>
</body>
</html>
```
FILE: styles.css
```css
* { box-sizing: border-box; }
html, body { margin: 0; height: 100%; }
body {
  font: 12px/16px "Noto Sans CJK SC", sans-serif;
  color: #000;
  background: #f4f4f4;
  overflow: hidden;
}
button, input, select {
  font: inherit;
  color: inherit;
  background: none;
  border: 0;
  padding: 0;
  margin: 0;
  appearance: none;
  white-space: nowrap;
}
p, h1 { margin: 0; font-size: inherit; font-weight: 400; }
svg { display: block; flex: none; overflow: hidden; }
.defs { position: absolute; width: 0; height: 0; }
.m { font: 10px/16px "Liberation Mono", monospace; }
.i16 { width: 16px; height: 16px; }
.app { position: relative; height: 100vh; display: flex; flex-direction: column; }

/* title bar */
.titlebar {
  flex: none; height: 24px; display: flex; align-items: center; padding-left: 3px; gap: 3px;
  background: linear-gradient(#1f4c9c 0, #83bdf5 2px, #6fb0ee 6px, #3f86d6 11px, #3474c8 16px, #2a56ae 22px, #27479a 24px);
  color: #fff;
}
.title { flex: 1; font: 10px/16px "Liberation Mono", monospace; padding-top: 2px; }
.winctl { align-self: flex-start; display: flex; margin-right: 3px; height: 14px; border: 1px solid #dce8f8; border-top: 0; border-radius: 0 0 4px 4px; overflow: hidden; }
.wc { width: 25px; display: flex; justify-content: center; border-right: 1px solid #dce8f8; background: linear-gradient(#a9c8f0, #6c9ce0); }
.wc.close { width: 42px; border: 0; background: linear-gradient(#e39a8c, #c4402c 50%, #d8664c); }

/* menu bar */
.menubar { flex: none; height: 22px; display: flex; align-items: center; padding: 0 4px 0 5px; }
.grip { flex: none; width: 4px; height: 14px; margin-right: 1px; background: repeating-linear-gradient(#b0b0b0 0 2px, transparent 2px 4px) 0 0 / 2px 100% no-repeat; }
.menu { width: 58px; text-align: center; }
.ask { margin-left: auto; width: 162px; }
.ask::placeholder { color: #a8a8a8; opacity: 1; }
.drop { flex: none; width: 11px; height: 16px; display: flex; align-items: center; justify-content: center; }
.drop::after, .combo::after { content: ""; border: 3px solid transparent; border-top-color: #000; border-bottom: 0; }
.drop.off::after { border-top-color: #aaa; }
.docclose { width: 17px; display: flex; justify-content: flex-end; }

/* toolbars */
.toolbars { flex: none; height: 29px; display: flex; align-items: center; padding-bottom: 1px; border-bottom: 2px solid #8a8a8a; }
.toolbar { display: flex; align-items: center; }
.std { padding-left: 5px; flex: none; width: 779px; }
.fmt { flex: 1; padding-left: 5px; }
.tb { flex: none; width: 23px; height: 22px; display: flex; align-items: center; justify-content: center; }
.tb.on, .vw.on { background: #e0ecf5; outline: 1px solid #4a9ccc; outline-offset: -1px; }
.sep { flex: none; width: 6px; height: 16px; background: linear-gradient(#c4c4c4, #c4c4c4) 3px 0 / 1px 100% no-repeat; }
.combo { flex: none; display: flex; align-items: center; height: 20px; }
.combo select { flex: 1; min-width: 0; }
.zoom { width: 61px; padding: 0 2px 0 4px; font: 10px/16px "Liberation Sans", sans-serif; }
.style { width: 76px; margin-left: 5px; font-family: "Liberation Mono", "Noto Sans CJK SC", monospace; }
.font { width: 117px; margin-left: 8px; }
.size { width: 45px; margin: 0 4px 0 9px; }
.read { width: 66px; gap: 4px; }
.serif { font: 700 15px/16px "Liberation Serif", serif; }
.it { font-style: italic; }
.un { text-decoration: underline; }
.cbox, .cshade { width: 15px; height: 15px; line-height: 15px; color: #333; outline: 1px solid #6f86b0; }
.cshade { background: #b8b8b8; outline: 0; }
.more { flex: none; width: 10px; height: 24px; background: linear-gradient(#c8c8c8, #969696); border-radius: 0 3px 3px 0; }

/* document window */
.work { flex: 1; min-height: 0; display: grid; grid-template: 23px minmax(0, 1fr) / 23px minmax(0, 1fr) 17px; border-left: 2px solid #8a8a8a; padding-right: 2px; }
.corner { padding: 3px; }
.tabsel { display: flex; width: 16px; height: 15px; border: 1px solid #aaa; background: #fff; }
.hruler { display: flex; justify-content: center; min-width: 0; overflow: hidden; }
.hscale { position: relative; flex: none; display: flex; width: 1124px; padding: 5px 0 6px 3px; font: 10px/12px "Liberation Sans", sans-serif; }
.hleft { width: 82px; display: flex; justify-content: space-between; padding: 0 13px 0 2px; background: #a5a5a5; }
.hmid { width: 388px; display: flex; padding: 0 7px 0 10px; }
.hmid span { flex: 1; text-align: center; background: linear-gradient(#999, #999) 50% 100% / 1px 3px no-repeat; height: 17px; }
.hright { width: 82px; display: flex; padding-left: 12px; background: #a5a5a5; }
.hright span { flex: none; width: 20px; text-align: center; }
.indent { position: absolute; left: 80px; top: 1px; }
.rindent { position: absolute; left: 466px; top: 8px; }
.vruler { padding-top: 14px; overflow: hidden; font: 10px/12px "Liberation Sans", sans-serif; }
.vtop, .vmid { width: 13px; margin-left: 5px; display: flex; flex-direction: column; }
.vtop { height: 65px; background: #a5a5a5; padding-bottom: 15px; justify-content: space-between; }
.vtop span { height: 14px; }
.vtop span:last-child { height: 28px; }
.vmid { height: 610px; margin-top: 14px; }
.vmid span { flex: 1; }
.vtop span, .vmid span { writing-mode: vertical-rl; transform: rotate(180deg); text-align: center; line-height: 13px; }

.desk { background: #a5a5a5; overflow: hidden; display: flex; justify-content: center; gap: 10px; padding: 11px 0 0 0; }
.page { flex: none; width: 556px; height: 786px; border: 1px solid #000; background: #f4f4f4; box-shadow: 2px 2px 0 #000; font-size: 10px; line-height: 15px; padding-top: 50px; }
.crops { display: flex; justify-content: space-between; padding: 0 67px; }
.crop { width: 17px; height: 17px; border: 0 solid #a0a0a0; border-bottom-width: 1px; }
.crop.l { border-right-width: 1px; }
.crop.r { border-left-width: 1px; }
.body { padding: 1px 84px 0; }
.body p { display: flex; height: 15px; align-items: center; white-space: nowrap; padding-bottom: 2px; }
.body .gap { height: 14px; }
.body .center { justify-content: center; padding-left: 4px; }
.bold { font-weight: 700; }
.mark { flex: none; width: 3px; height: 4px; margin: 5px 0 0 1px; border: solid #8a8a8a; border-width: 0 1px 1px 0; }
.mark.in { margin-left: 2px; }
.lab3 { width: 40px; }
.tab { width: 19px; }
.tab.wide { width: 43px; }
.w83, .w63, .w88, .w176 { height: 12px; border-bottom: 1px solid #000; }
.w83 { width: 83px; }
.w63 { width: 63px; }
.w88 { width: 88px; }
.w176 { width: 176px; }
.cellrow { display: flex; margin: -1px -6px 3px; }
.cell { flex: none; width: 372px; height: 192px; border: 1px solid #000; padding-left: 5px; }

.vscroll { grid-row: 1 / 3; grid-column: 3; display: flex; flex-direction: column; align-items: center; }
.split { width: 17px; height: 5px; border: solid #222; border-width: 0 1px 2px 0; }
.sb { width: 17px; height: 17px; display: flex; align-items: center; justify-content: center; }
.up { height: 19px; }
.vthumb { flex: 558 1 0; width: 15px; border: 1px solid #9a9a9a; border-radius: 2px; background: linear-gradient(90deg, #f6f6f6, #d0d0d4); display: flex; flex-direction: column; align-items: center; justify-content: center; gap: 2px; }
.vthumb i { width: 8px; height: 1px; background: #555; }
.vfill { flex: 79 1 0; }

/* view buttons and horizontal scrollbar */
.hscroll { flex: none; height: 18px; display: flex; align-items: center; padding: 0 18px 0 2px; margin-top: -1px; background: #f4f4f4; z-index: 1; }
.vw { width: 17px; height: 17px; display: flex; align-items: center; justify-content: center; }
.ha { width: 18px; display: flex; justify-content: center; }
.hthumb { flex: 1; height: 15px; border: 1px solid #a0a0a0; border-radius: 2px; background: linear-gradient(#f6f6f6, #dcdce0 50%, #c8c8cc); display: flex; align-items: center; justify-content: center; gap: 2px; }
.hthumb i { width: 1px; height: 7px; background: #555; }

/* drawing toolbar */
.drawbar { flex: none; height: 27px; margin-top: 1px; display: flex; align-items: center; padding-left: 6px; border-bottom: 1px solid #a5a5a5; }
.drawbar .txt { flex: none; margin: 0 1px; }
.drawbar .more { margin-left: 3px; }
.drawbar .sep { margin-right: 3px; }
.drawbar .sep ~ .sep { margin-right: 0; }

/* status bar */
.status { flex: none; height: 20px; display: flex; align-items: center; padding-left: 49px; white-space: nowrap; }
.status > span { flex: none; }
.dim { color: #a8a8a8; }
.s62 { width: 62px; }
.s50 { width: 50px; }
.s141 { width: 141px; }
.s39 { width: 39px; }
.s34 { width: 34px; }
.s79 { width: 79px; }

/* taskbar */
.taskbar { flex: none; height: 30px; display: flex; align-items: center; gap: 4px; padding: 2px 14px 0 8px; color: #fff; background: linear-gradient(#21459a 0, #86bcf4 2px, #5a9ae8 7px, #3b78d4 16px, #2a5cbc 26px, #2450a8 30px); }
.start { width: 44px; height: 30px; margin: -2px 6px 0 0; }
.quick { width: 42px; height: 24px; display: flex; align-items: center; justify-content: center; border: 1px solid #4a86d8; border-radius: 2px; background: #5a98e44d; }
.task { flex: 0 1 156px; min-width: 0; height: 24px; display: flex; align-items: center; gap: 3px; padding-left: 8px; border: 1px solid #2f62b8; border-radius: 2px; background: linear-gradient(#5f9fea, #3570cc 55%, #2f67c4); overflow: hidden; }
.task.active { background: linear-gradient(#16357c, #1f4a9c); border-color: #122c68; }
.tray { margin-left: auto; display: flex; align-items: center; gap: 2px; }
.ts { margin-right: 21px; }
.clock { margin-left: 6px; font: 12px/16px "Liberation Mono", monospace; }

/* floating input-method bar */
.ime { position: absolute; left: 26px; bottom: 101px; z-index: 2; display: flex; height: 26px; padding: 2px; background: #dcdcdc; border: 1px solid; border-color: #fff #555 #555 #fff; box-shadow: 1px 1px 0 #444; }
.ime button { width: 20px; display: flex; align-items: center; justify-content: center; border: 1px solid; border-color: #fff #444 #444 #fff; }
.ime .imename { width: 71px; font-size: 15px; line-height: 18px; }
.watermark { position: absolute; left: 623px; bottom: 8px; z-index: 3; font-size: 39px; line-height: 40px; color: #fdf8fa; pointer-events: none; white-space: nowrap; }
```
